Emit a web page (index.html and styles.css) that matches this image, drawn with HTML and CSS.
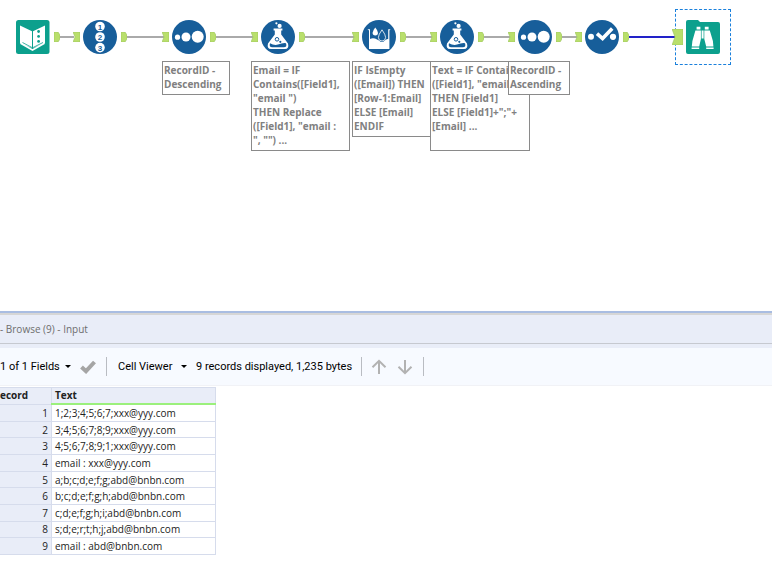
FILE: index.html
```
<!doctype html>
<html lang="en">

<head>
  <meta charset="utf-8">
  <title>Workflow - Browse</title>
  <link rel="stylesheet" href="styles.css">
</head>

<body>
  <!-- shared icon shapes -->
  <svg class="defs" aria-hidden="true">
    <symbol id="anchorIn" viewBox="0 0 7 10"><path d="M0 0H7V10H0L2 5Z" fill="#b9df6c" stroke="#9cc560" stroke-width=".6"/></symbol>
    <symbol id="anchorOut" viewBox="0 0 6 10"><path d="M0 0H4L6 3V7L4 10H0Z" fill="#b9df6c" stroke="#9cc560" stroke-width=".6"/></symbol>
    <symbol id="dots" viewBox="0 0 34 34">
      <circle cx="17" cy="17" r="17" fill="#175e9a"/>
      <g fill="#fff"><circle cx="5.5" cy="17.2" r="2.6"/><circle cx="14" cy="17" r="4.5"/><circle cx="25.7" cy="16.7" r="6"/></g>
    </symbol>
    <symbol id="flask" viewBox="0 0 34 34">
      <circle cx="17" cy="17" r="17" fill="#175e9a"/>
      <g fill="#fff">
        <circle cx="15.4" cy="3.3" r="1.1"/><circle cx="18.6" cy="5.9" r="2.1"/>
        <path d="M12.6 8.6H21.4V10.6H20.2V14.5L27 23.4Q28.4 28.8 24 29H10Q5.6 28.8 7 23.4L13.8 14.5V10.6H12.6Z"/>
      </g>
      <path d="M9 23.2Q13 25.6 17 24.6Q22 22.6 25 23.2Q26.4 27 22.8 27.2H11.2Q7.8 27 9 23.2Z" fill="#175e9a"/>
      <circle cx="16" cy="19.3" r="1.8" fill="none" stroke="#175e9a"/><circle cx="19.3" cy="21.8" r="1.1" fill="#175e9a"/>
    </symbol>
  </svg>

  <div class="canvas">
    <svg class="wires" aria-hidden="true">
      <path d="M60 37H74M127 37H164M216 37H254M305 37H354M406 37H432M484 37H510M562 37H577" stroke="#aaa" stroke-width="2"/>
      <path d="M629 37H676" stroke="#2222c8" stroke-width="2"/>
    </svg>

    <div class="node inputData">
      <svg class="icon" viewBox="0 0 34 34">
        <rect width="33.5" height="34" rx="2.5" fill="#0ca08d"/>
        <path d="M4 5.5L16 11.2V28L4 23.2ZM17 11.2L29 5.5V23.2L17 28Z" fill="#fff"/>
        <path d="M4.6 23.2L16.5 30L28.4 23.2" fill="none" stroke="#fff" stroke-width="1.6"/>
        <path d="M6.5 22.5L16.5 27.8L27 22.5" fill="none" stroke="#0ca08d" stroke-width=".8"/>
        <g fill="#0ca08d"><circle cx="22.6" cy="11.5" r="1.4"/><circle cx="22.6" cy="16.4" r="1.4"/><circle cx="22.6" cy="21.4" r="1.4"/></g>
      </svg>
      <svg class="out"><use href="#anchorOut"/></svg>
    </div>

    <div class="node recordId">
      <svg class="in"><use href="#anchorIn"/></svg>
      <svg class="icon" viewBox="0 0 34 34">
        <circle cx="17" cy="17" r="17" fill="#175e9a"/>
        <g fill="#fff"><circle cx="17" cy="6.5" r="4.8"/><circle cx="17" cy="17" r="4.8"/><circle cx="17" cy="27.6" r="4.8"/></g>
        <g class="digits"><text x="17" y="9.5">1</text><text x="17" y="20">2</text><text x="17" y="30.5">3</text></g>
      </svg>
      <svg class="out"><use href="#anchorOut"/></svg>
    </div>

    <div class="node sortDesc">
      <svg class="in"><use href="#anchorIn"/></svg>
      <svg class="icon"><use href="#dots"/></svg>
      <svg class="out"><use href="#anchorOut"/></svg>
    </div>

    <div class="node formulaEmail">
      <svg class="in"><use href="#anchorIn"/></svg>
      <svg class="icon"><use href="#flask"/></svg>
      <svg class="out"><use href="#anchorOut"/></svg>
    </div>

    <div class="node multiRow">
      <svg class="in"><use href="#anchorIn"/></svg>
      <svg class="icon" viewBox="0 0 34 34">
        <circle cx="17" cy="17" r="17" fill="#175e9a"/>
        <path d="M5.4 9.2H8V19Q10.5 17.6 13 18.6Q15 19.6 17 20.6Q20 23.6 22.8 20.6Q24.2 18.8 26.2 19V9.2H28.6L27.4 10.6V29H7V10.6Z" fill="#fff"/>
        <path d="M13.3 7.6Q16 11 16 12.7A2.7 2.7 0 0 1 10.6 12.7Q10.6 11 13.3 7.6Z" fill="#fff"/>
        <path d="M20 9.8Q23.6 14.7 23.6 17.4A3.6 3.6 0 0 1 16.4 17.4Q16.4 14.7 20 9.8Z" fill="#175e9a" stroke="#fff" stroke-width=".8"/>
      </svg>
      <svg class="out"><use href="#anchorOut"/></svg>
    </div>

    <div class="node formulaText">
      <svg class="in"><use href="#anchorIn"/></svg>
      <svg class="icon"><use href="#flask"/></svg>
      <svg class="out"><use href="#anchorOut"/></svg>
    </div>

    <div class="node sortAsc">
      <svg class="in"><use href="#anchorIn"/></svg>
      <svg class="icon"><use href="#dots"/></svg>
      <svg class="out"><use href="#anchorOut"/></svg>
    </div>

    <div class="node selectTool">
      <svg class="in"><use href="#anchorIn"/></svg>
      <svg class="icon" viewBox="0 0 34 34">
        <circle cx="17" cy="17" r="17" fill="#175e9a"/>
        <circle cx="6" cy="16.7" r="3" fill="#fff"/><circle cx="28" cy="16.8" r="3.1" fill="#fff"/>
        <path d="M12 13.6L17.6 18.6L27.2 8.6" fill="none" stroke="#175e9a" stroke-width="5.6"/>
        <path d="M12 13.6L17.6 18.6L27.2 8.6" fill="none" stroke="#fff" stroke-width="3.6"/>
      </svg>
      <svg class="out"><use href="#anchorOut"/></svg>
    </div>

    <div class="selection"></div>
    <div class="node browse">
      <svg class="bigIn" viewBox="0 0 11 16"><path d="M0 0H11V16H0L3 8Z" fill="#b9df6c" stroke="#9cc560" stroke-width=".6"/></svg>
      <svg class="icon" viewBox="0 0 34 34">
        <path d="M2 0H12L14 2H32Q34 2 34 4V32Q34 34 32 34H2Q0 34 0 32V2Q0 0 2 0Z" fill="#0ca08d"/>
        <g fill="#fff">
          <path d="M10.6 6.8H14.4V9.6H10.6ZM18.8 6.8H22.6V9.6H18.8Z"/>
          <path d="M9.4 10.6H14.9V19L13.2 26.6H5.8L6.4 21ZM18.3 10.6H23.8L26.9 21L27.4 26.6H20.2L18.3 19Z"/>
          <path d="M5.6 27.4H13.2V29H5.6ZM20.2 27.4H27.6V29H20.2ZM15.6 10.6H17.6V18.6H15.6Z"/>
        </g>
      </svg>
    </div>

    <div class="note noteDesc">RecordID -<br>Descending</div>
    <div class="note noteEmail">Email = IF<br>Contains([Field1],<br>"email ")<br>THEN Replace<br>([Field1], "email :<br>", "") ...</div>
    <div class="note noteRow">IF IsEmpty<br>([Email]) THEN<br>[Row-1:Email]<br>ELSE [Email]<br>ENDIF</div>
    <div class="note noteText">Text = IF Contai<br>([Field1], "email<br>THEN [Field1]<br>ELSE [Field1]+";"+<br>[Email] ...</div>
    <div class="note noteAsc">RecordID -<br>Ascending</div>
  </div>

  <div class="results">
    <div class="resultsTitle">- Browse (9) - Input</div>

    <div class="toolbar">
      <label class="drop fields">
        <select aria-label="Fields"><option>1 of 1 Fields</option></select>
      </label>
      <button type="button" class="apply" aria-label="Apply">
        <svg width="16" height="14" viewBox="0 0 16 14"><path d="M1.5 7L6 11.2L14.5 2" fill="none" stroke="#a5a5a5" stroke-width="4"/></svg>
      </button>
      <span class="sep"></span>
      <label class="drop viewer">
        <select aria-label="Viewer"><option>Cell Viewer</option></select>
      </label>
      <span class="status">9 records displayed, 1,235 bytes</span>
      <span class="sep"></span>
      <button type="button" class="arrow" aria-label="Previous">
        <svg width="16" height="16" viewBox="0 0 16 16"><path d="M8 15V2M1.5 8.2L8 1.8L14.5 8.2" fill="none" stroke="#b2b2b2" stroke-width="2"/></svg>
      </button>
      <button type="button" class="arrow" aria-label="Next">
        <svg width="16" height="16" viewBox="0 0 16 16"><path d="M8 1V14M1.5 7.8L8 14.2L14.5 7.8" fill="none" stroke="#b2b2b2" stroke-width="2"/></svg>
      </button>
      <span class="sep"></span>
    </div>

    <table class="grid">
      <thead>
        <tr><th class="rec">ecord</th><th class="txt">Text</th></tr>
      </thead>
      <tbody>
        <tr><td class="rec">1</td><td>1;2;3;4;5;6;7;xxx@yyy.com</td></tr>
        <tr><td class="rec">2</td><td>3;4;5;6;7;8;9;xxx@yyy.com</td></tr>
        <tr><td class="rec">3</td><td>4;5;6;7;8;9;1;xxx@yyy.com</td></tr>
        <tr><td class="rec">4</td><td>email : xxx@yyy.com</td></tr>
        <tr><td class="rec">5</td><td>a;b;c;d;e;f;g;abd@bnbn.com</td></tr>
        <tr><td class="rec">6</td><td>b;c;d;e;f;g;h;abd@bnbn.com</td></tr>
        <tr><td class="rec">7</td><td>c;d;e;f;g;h;i;abd@bnbn.com</td></tr>
        <tr><td class="rec">8</td><td>s;d;e;r;t;h;j;abd@bnbn.com</td></tr>
        <tr><td class="rec">9</td><td>email : abd@bnbn.com</td></tr>
      </tbody>
    </table>
  </div>
</body>

</html>
```
FILE: styles.css
```
body {
  margin: 0;
  font-family: "Open Sans", "Noto Sans", sans-serif;
  font-size: 10px;
  color: #222;
  background: #fff;
  overflow: hidden;
}

.defs {
  position: absolute;
  width: 0;
  height: 0;
}

/* workflow canvas */
.canvas {
  position: relative;
  height: 311px;
  overflow: hidden;
}

.wires {
  display: block;
  width: 100%;
  height: 100%;
  fill: none;
}

.node {
  position: absolute;
  top: 20px;
  display: flex;
  align-items: center;
}

.icon {
  width: 34px;
  height: 34px;
}

.in {
  width: 7px;
  height: 10px;
  margin-right: 3px;
  overflow: visible;
}

.out {
  width: 6px;
  height: 10px;
  margin-left: 4px;
  overflow: visible;
}

.bigIn {
  width: 11px;
  height: 16px;
  margin-right: 3px;
}

.digits text {
  fill: #175e9a;
  font-family: "Liberation Sans", sans-serif;
  font-size: 8px;
  font-weight: bold;
  text-anchor: middle;
}

.inputData { left: 16px; }
.recordId { left: 73px; }
.sortDesc { left: 162px; }
.formulaEmail { left: 251px; }
.multiRow { left: 352px; }
.formulaText { left: 430px; }
.sortAsc { left: 508px; }
.selectTool { left: 575px; }
.browse { left: 672px; }

.selection {
  position: absolute;
  left: 675px;
  top: 9px;
  width: 54px;
  height: 54px;
  border: 1px dashed #1a80dc;
}

.note {
  position: absolute;
  top: 61px;
  box-sizing: border-box;
  padding: 1px;
  border: 1px solid #8a8a8a;
  background: #fff;
  color: #808080;
  font-weight: bold;
  line-height: 14px;
  white-space: nowrap;
  overflow: hidden;
}

.noteDesc { left: 162px; width: 68px; height: 34px; }
.noteEmail { left: 251px; width: 99px; height: 90px; }
.noteRow { left: 352px; width: 99px; height: 76px; }
.noteText { left: 430px; width: 100px; height: 90px; }
.noteAsc { left: 508px; width: 62px; height: 34px; }

/* results window */
.results {
  border-top: 2px solid #a9bde2;
}

.resultsTitle {
  border-top: 2px solid #d6d6d6;
  border-bottom: 1px solid #c6c9d0;
  background: #e9edf8;
  color: #6e6e6e;
  line-height: 28px;
}

.toolbar {
  display: flex;
  align-items: center;
  height: 37px;
  border-top: 4px solid #e9edf8;
  border-bottom: 1px solid #f1f2f6;
  background: #f7faff;
  color: #000;
  font-family: Roboto, sans-serif;
  font-size: 11px;
  white-space: nowrap;
}

.drop {
  display: flex;
  align-items: center;
}

.drop::after {
  content: "";
  border: 3px solid transparent;
  border-top-color: #000;
  border-bottom: 0;
}

.drop select {
  appearance: none;
  width: 100%;
  padding: 0;
  border: 0;
  background: none;
  color: #000;
  font: inherit;
}

.fields { width: 71px; }
.viewer { width: 69px; margin-left: 11px; }

.toolbar button {
  display: flex;
  padding: 0;
  border: 0;
  background: none;
}

.toolbar .apply {
  margin: 0 10px 0 9px;
}

.sep {
  width: 1px;
  height: 19px;
  background: #b9bcc2;
}

.status {
  width: 165px;
  margin-left: 9px;
}

.status + .sep {
  margin-right: 9px;
}

.toolbar .arrow {
  margin-right: 10px;
}

.grid {
  width: 216px;
  height: 168px;
  margin-top: 1px;
  border-collapse: collapse;
  table-layout: fixed;
}

.grid th,
.grid td {
  padding: 0 3px;
  border: 1px solid #d6dcec;
  line-height: 14px;
  text-align: left;
  white-space: nowrap;
}

.grid th {
  background: #e9edf8;
  line-height: 15px;
  font-weight: bold;
}

.grid .rec {
  width: 48px;
  border-left: 0;
  background: #e9edf8;
}

.grid th.rec {
  padding-left: 0;
}

.grid td.rec {
  text-align: right;
}

.grid th.txt {
  border-bottom: 2px solid #9bf07c;
}
```
